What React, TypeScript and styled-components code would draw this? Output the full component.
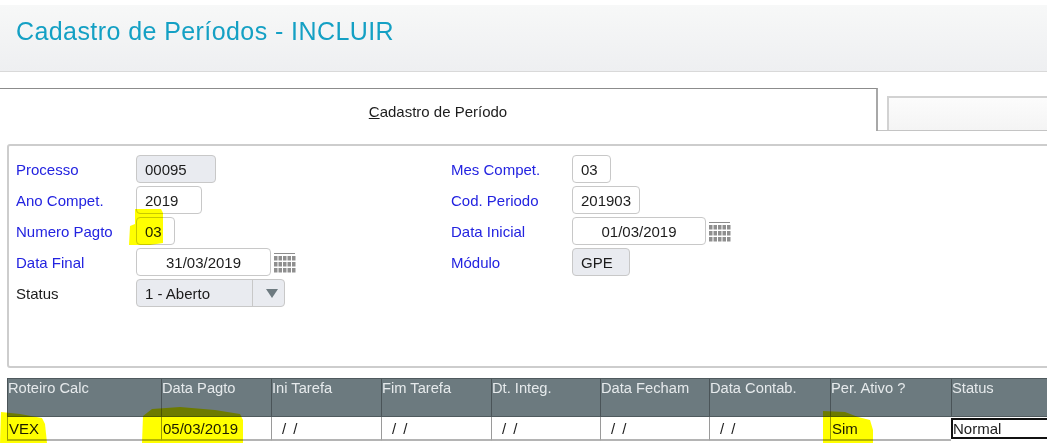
import React from 'react';
import styled, { createGlobalStyle } from 'styled-components';

const GlobalStyle = createGlobalStyle`
  html, body {
    margin: 0;
    padding: 0;
    background: #fff;
  }
`;

const Root = styled.div`
  position: relative;
  width: 1047px;
  height: 443px;
  overflow: hidden;
  background: #fff;
  font-family: "Liberation Sans", Arial, sans-serif;
  font-size: 15px;
  color: #1c1c1c;
  padding-top: 5px;
  box-sizing: border-box;
  filter: blur(0.35px);
`;

const Header = styled.div`
  display: flex;
  align-items: center;
  box-sizing: border-box;
  height: 67px;
  padding: 0 0 14px 16px;
  background: linear-gradient(#f7f8f8, #eeeff1);
  border-bottom: 1px solid #d9d9d9;
`;

const Title = styled.h1`
  margin: 0;
  font-size: 25px;
  font-weight: 400;
  letter-spacing: 0.42px;
  color: #14a0c4;
`;

const Tabs = styled.div`
  display: flex;
  align-items: flex-end;
  box-sizing: border-box;
  height: 43px;
  margin-top: 16px;
  border-bottom: 1px solid #c4c4c4;
`;

const ActiveTab = styled.div`
  flex: none;
  display: flex;
  align-items: center;
  justify-content: center;
  box-sizing: border-box;
  width: 878px;
  height: 43px;
  margin-bottom: -1px;
  padding-top: 2px;
  background: #fff;
  border-top: 1px solid #8c8c8c;
  border-right: 2px solid #a8a8a8;
  font-size: 15px;
`;

const Underlined = styled.span`
  text-decoration: underline;
`;

const IdleTab = styled.div`
  flex: none;
  box-sizing: border-box;
  width: 170px;
  height: 34px;
  margin-left: 9px;
  background: linear-gradient(#fcfcfc, #f4f4f4);
  border-top: 2px solid #d2d2d2;
  border-left: 2px solid #d2d2d2;
`;

const Panel = styled.div`
  display: flex;
  box-sizing: border-box;
  width: 1060px;
  height: 224px;
  margin: 13px 0 0 7px;
  padding: 9px 0 0 7px;
  border: 2px solid #cdcdcd;
  border-radius: 3px;
`;

const FormColumn = styled.div<{ $width: number }>`
  display: flex;
  flex-direction: column;
  gap: 3px;
  width: ${(p) => p.$width}px;
`;

const FieldRow = styled.div`
  display: flex;
  align-items: center;
  height: 28px;
`;

const Label = styled.span<{ $plain?: boolean; $wide?: boolean }>`
  flex: none;
  width: ${(p) => (p.$wide ? 121 : 120)}px;
  color: ${(p) => (p.$plain ? '#1c1c1c' : '#2323e0')};
`;

const Input = styled.div<{ $width: number; $readOnly?: boolean; $center?: boolean }>`
  display: flex;
  align-items: center;
  justify-content: ${(p) => (p.$center ? 'center' : 'flex-start')};
  box-sizing: border-box;
  width: ${(p) => p.$width}px;
  height: 28px;
  padding-left: ${(p) => (p.$center ? 0 : 8)}px;
  background: ${(p) => (p.$readOnly ? '#e9ebf0' : '#fff')};
  border: 1px solid #c8c8c8;
  border-radius: 4px;
`;

const Select = styled.div`
  display: flex;
  align-items: center;
  box-sizing: border-box;
  width: 149px;
  height: 28px;
  background: #e9ebf0;
  border: 1px solid #c8c8c8;
  border-radius: 4px;
`;

const SelectValue = styled.span`
  flex: 1;
  padding-left: 8px;
`;

const SelectArrow = styled.span`
  display: flex;
  align-items: center;
  justify-content: center;
  align-self: stretch;
  box-sizing: border-box;
  width: 32px;
  padding-left: 6px;
  border-left: 1px solid #c8c8c8;
`;

const CalendarSvg = styled.svg`
  margin: 2px 0 0 3px;
`;

const Grid = styled.div`
  display: grid;
  grid-template-columns: 154px 110px 110px 110px 109px 109px 121px 121px 110px;
  margin: 10px 0 0 7px;
  width: 1060px;
`;

const HeadCell = styled.div`
  box-sizing: border-box;
  height: 39px;
  padding: 1px 0 0 0;
  background: #6c7a7f;
  color: #e6eaec;
  font-size: 14.7px;
  border-top: 1px solid #4f5a5e;
  border-left: 1px solid #4a5458;
  border-bottom: 1px solid #4f5a5e;
`;

const BodyCell = styled.div<{ $center?: boolean; $active?: boolean }>`
  display: flex;
  align-items: center;
  box-sizing: border-box;
  height: 24px;
  padding-left: ${(p) => (p.$center ? 10 : 1)}px;
  border-left: 1px solid #9a9a9a;
  border-bottom: 2px solid #b4b4b4;
  word-spacing: ${(p) => (p.$center ? 3 : 0)}px;
  ${(p) => p.$active && 'border: 2px solid #111; margin-top: 1px; height: 21px; padding-left: 0;'}
`;

const Marker = styled.svg`
  position: absolute;
  left: 0;
  top: 0;
  pointer-events: none;
  mix-blend-mode: multiply;
`;

function CalendarIcon() {
  return (
    <CalendarSvg width="22" height="20" viewBox="0 0 22 20">
      <rect x="0" y="0" width="21" height="1" fill="#8c8c8c" />
      {[3, 9, 15].map((y) =>
        [0, 4.5, 9, 13.5, 18].map((x) => (
          <rect key={`${x}-${y}`} x={x} y={y} width="3.5" height="4.5" fill="#8f8f8f" />
        )),
      )}
    </CalendarSvg>
  );
}

const headers = [
  'Roteiro Calc', 'Data Pagto', 'Ini Tarefa', 'Fim Tarefa', 'Dt. Integ.',
  'Data Fecham', 'Data Contab.', 'Per. Ativo ?', 'Status',
];

function App() {
  return (
    <Root>
      <GlobalStyle />
      <Header>
        <Title>Cadastro de Períodos - INCLUIR</Title>
      </Header>
      <Tabs>
        <ActiveTab>
          <span><Underlined>C</Underlined>adastro de Período</span>
        </ActiveTab>
        <IdleTab />
      </Tabs>
      <Panel>
        <FormColumn $width={435}>
          <FieldRow>
            <Label>Processo</Label>
            <Input $width={80} $readOnly>00095</Input>
          </FieldRow>
          <FieldRow>
            <Label>Ano Compet.</Label>
            <Input $width={66}>2019</Input>
          </FieldRow>
          <FieldRow>
            <Label>Numero Pagto</Label>
            <Input $width={39}>03</Input>
          </FieldRow>
          <FieldRow>
            <Label>Data Final</Label>
            <Input $width={135} $center>31/03/2019</Input>
            <CalendarIcon />
          </FieldRow>
          <FieldRow>
            <Label $plain>Status</Label>
            <Select>
              <SelectValue>1 - Aberto</SelectValue>
              <SelectArrow>
                <svg width="12" height="9" viewBox="0 0 12 9">
                  <path d="M0 0h12L6 9z" fill="#6d7a80" />
                </svg>
              </SelectArrow>
            </Select>
          </FieldRow>
        </FormColumn>
        <FormColumn $width={400}>
          <FieldRow>
            <Label $wide>Mes Compet.</Label>
            <Input $width={39}>03</Input>
          </FieldRow>
          <FieldRow>
            <Label $wide>Cod. Periodo</Label>
            <Input $width={68}>201903</Input>
          </FieldRow>
          <FieldRow>
            <Label $wide>Data Inicial</Label>
            <Input $width={134} $center>01/03/2019</Input>
            <CalendarIcon />
          </FieldRow>
          <FieldRow>
            <Label $wide>Módulo</Label>
            <Input $width={58} $readOnly>GPE</Input>
          </FieldRow>
        </FormColumn>
      </Panel>
      <Grid>
        {headers.map((h) => (
          <HeadCell key={h}>{h}</HeadCell>
        ))}
        <BodyCell>VEX</BodyCell>
        <BodyCell>05/03/2019</BodyCell>
        <BodyCell $center>/ /</BodyCell>
        <BodyCell $center>/ /</BodyCell>
        <BodyCell $center>/ /</BodyCell>
        <BodyCell $center>/ /</BodyCell>
        <BodyCell $center>/ /</BodyCell>
        <BodyCell>Sim</BodyCell>
        <BodyCell $active>Normal</BodyCell>
      </Grid>
      <Marker width="1047" height="443" viewBox="0 0 1047 443">
        <path d="M135 209 L161 209 L163 213 L163 243 L150 245 L129 245 L130 226 L135 224 Z" fill="#ffff00" />
        <path d="M1 412 L20 414 L42 418 L45 424 L47 443 L0 443 Z" fill="#ffff00" />
        <path d="M143 416 L152 409 L180 407 L215 410 L240 414 L243 420 L243 443 L142 443 Z" fill="#ffff00" />
        <path d="M823 411 L845 412 L858 417 L870 420 L873 430 L873 443 L823 443 Z" fill="#ffff00" />
      </Marker>
    </Root>
  );
}

export default App;
